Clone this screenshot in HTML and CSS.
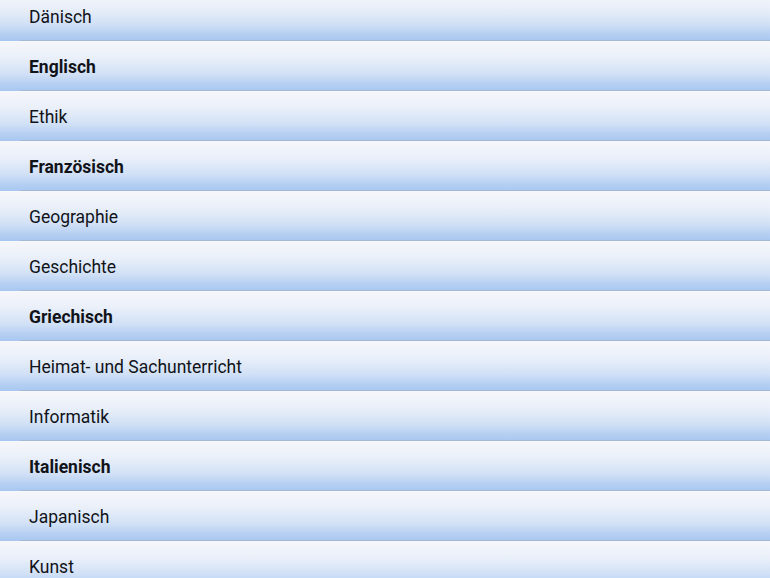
FILE: index.html
```html
<!DOCTYPE html>
<html lang="de">
<head>
<meta charset="utf-8">
<title>Fächer</title>
<link rel="stylesheet" href="styles.css">
</head>
<body>
<ul class="list">
  <li class="row"><span class="label">Dänisch</span></li>
  <li class="row"><span class="label bold">Englisch</span></li>
  <li class="row"><span class="label">Ethik</span></li>
  <li class="row"><span class="label bold">Französisch</span></li>
  <li class="row"><span class="label">Geographie</span></li>
  <li class="row"><span class="label">Geschichte</span></li>
  <li class="row"><span class="label bold">Griechisch</span></li>
  <li class="row"><span class="label">Heimat- und Sachunterricht</span></li>
  <li class="row"><span class="label">Informatik</span></li>
  <li class="row"><span class="label bold">Italienisch</span></li>
  <li class="row"><span class="label">Japanisch</span></li>
  <li class="row"><span class="label">Kunst</span></li>
</ul>
</body>
</html>
```
FILE: styles.css
```css
html, body {
  margin: 0;
  padding: 0;
  background: #ffffff;
  overflow: hidden;
}
body {
  font-family: "Roboto", "Liberation Sans", sans-serif;
  color: #111318;
}
.list {
  list-style: none;
  margin: -9px 0 0 0;
  padding: 0;
}
.row {
  position: relative;
  height: 50px;
  display: flex;
  align-items: center;
  padding-left: 29px;
  padding-top: 1px;
  box-sizing: border-box;
  background: linear-gradient(to bottom, #f6f7fb 0%, #e9eff9 35%, #d2e1f6 65%, #b3cef2 88%, #a8c7f0 100%);
}
.row::after {
  content: "";
  position: absolute;
  left: 20px;
  right: 0;
  bottom: 0;
  height: 1px;
  background: #a3b9d6;
}
.label {
  font-size: 17.5px;
  letter-spacing: 0;
}
.bold {
  font-weight: 700;
}
```
